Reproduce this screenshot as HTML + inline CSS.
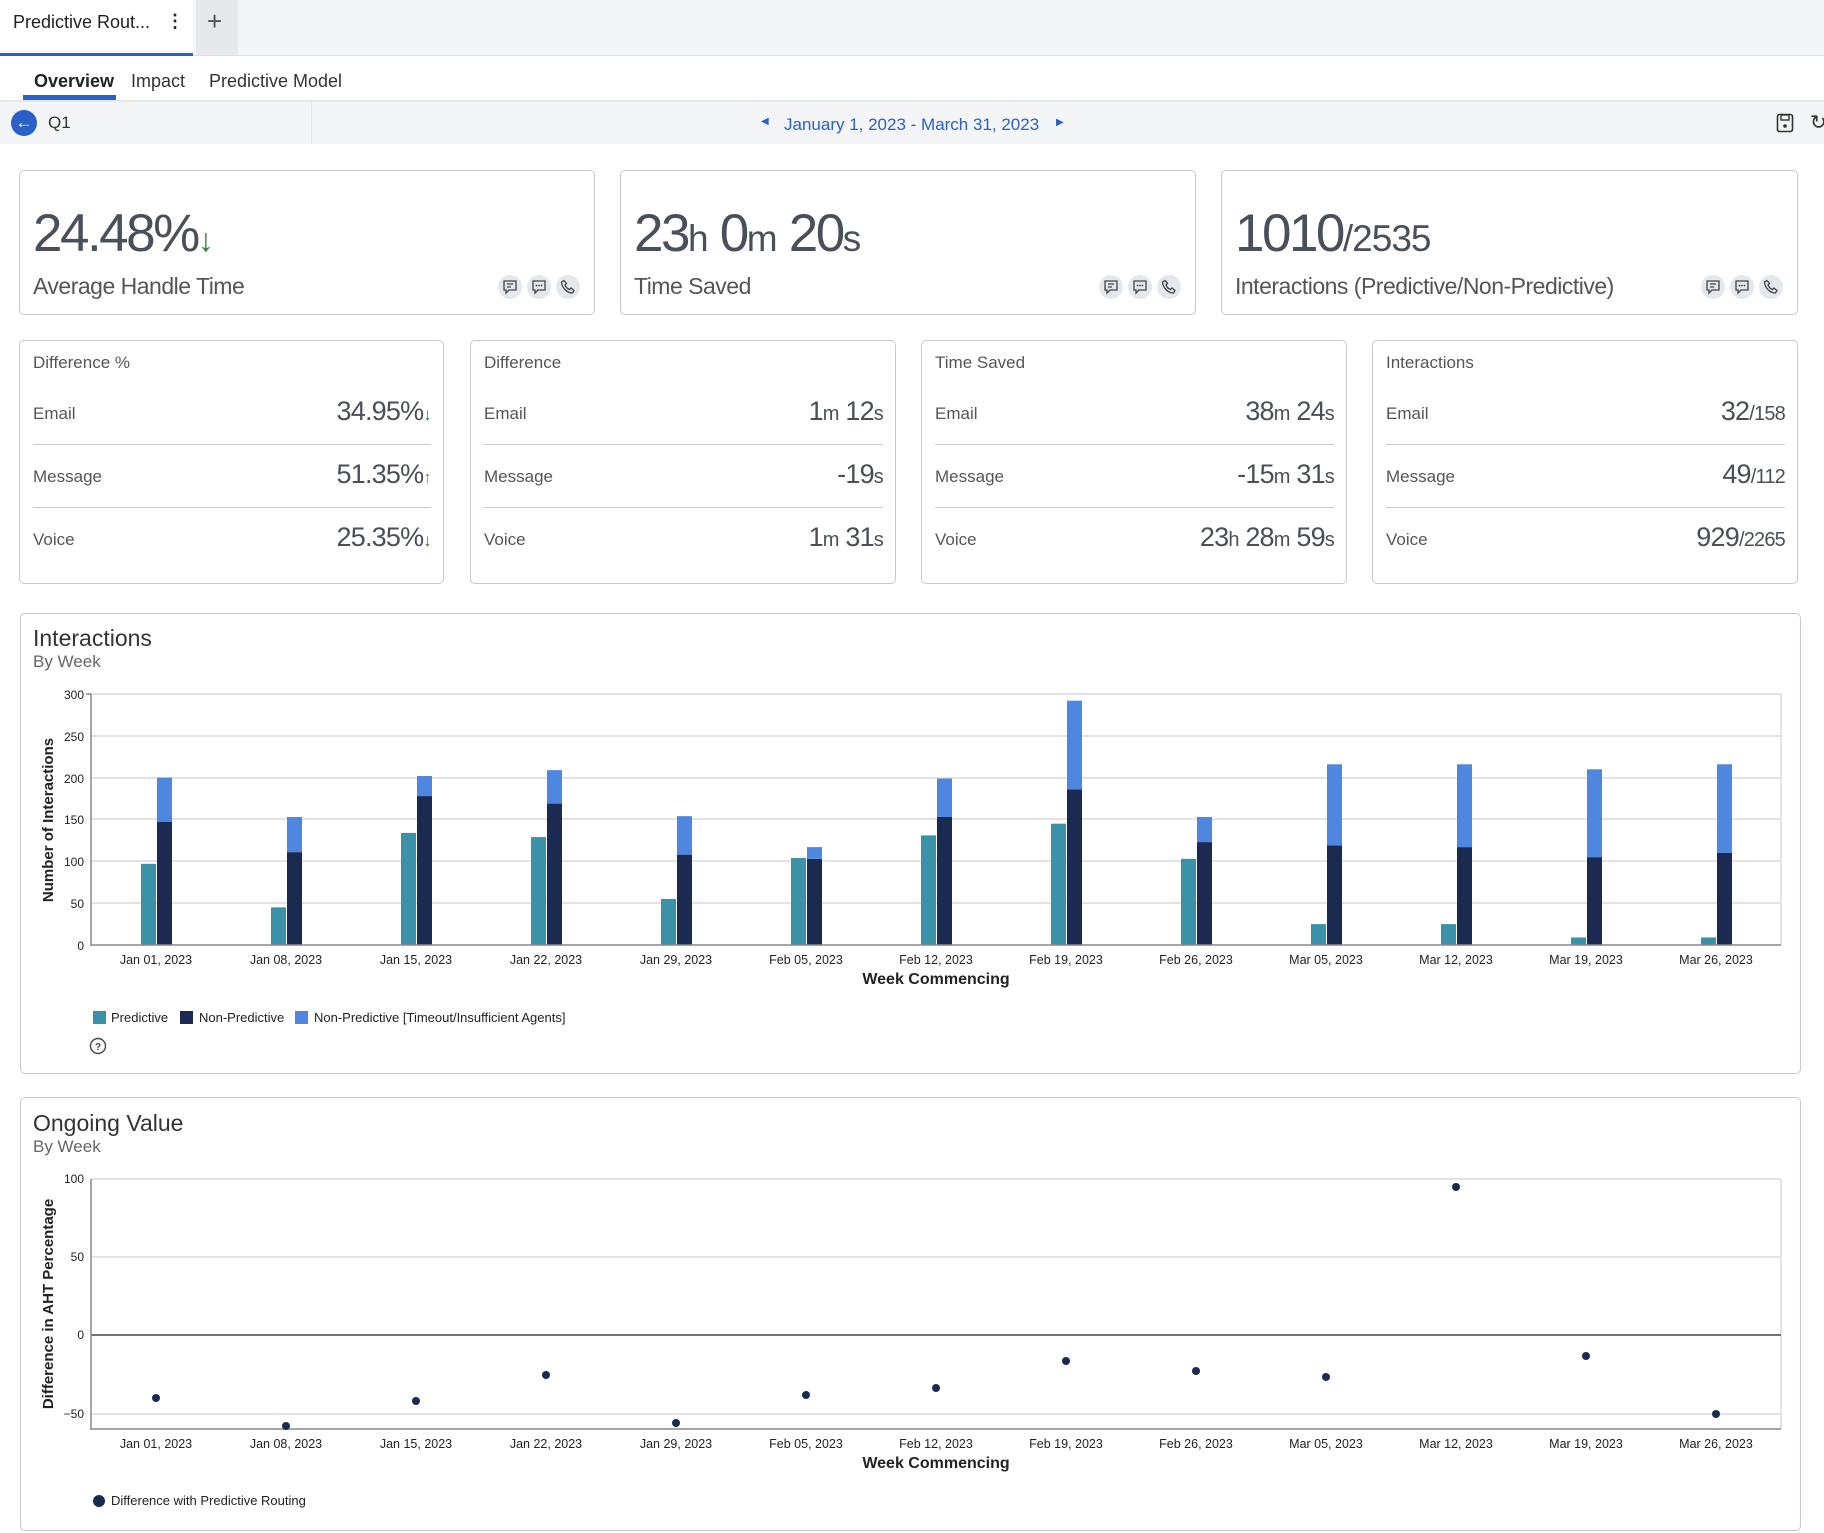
<!DOCTYPE html>
<html><head><meta charset="utf-8"><style>
*{box-sizing:border-box;margin:0;padding:0}
body{width:1824px;height:1533px;overflow:hidden;background:#fff;font-family:"Liberation Sans",sans-serif;color:#333;position:relative}
.a{position:absolute;white-space:nowrap}
.card{position:absolute;border:1px solid #c5c9d1;border-radius:5px;background:#fff}
.big{position:absolute;left:13px;top:32px;font-size:53px;letter-spacing:-2.5px;color:#4a505a}
.big small{font-size:37px;letter-spacing:-1px}
.lbl{position:absolute;left:13px;top:102px;font-size:23px;color:#555;letter-spacing:-.5px}
.ic{position:absolute;top:104px;width:24px;height:24px;border-radius:12px;background:#e4e7ec}
.ic svg{position:absolute;left:4px;top:4px}
.sc .t{position:absolute;left:13px;top:12px;font-size:17px;color:#555}
.row{position:absolute;left:13px;right:12px;height:62px}
.row .l{position:absolute;left:0;top:20px;font-size:17px;color:#555}
.row .v{position:absolute;right:0;top:12px;font-size:27px;color:#4a4f57;letter-spacing:-.8px}
.row .v small{font-size:20px}
.sep{position:absolute;left:13px;right:12px;height:1px;background:#c5c9d1}
.dn{color:#2e7d32;font-size:17px}.up{color:#d2691e;font-size:17px}
</style></head><body>
<div class="a" style="left:0;top:0;width:1824px;height:56px;background:#f4f5f7;border-bottom:1px solid #dde0e5"></div>
<div class="a" style="left:0;top:0;width:193px;height:56px;background:#fff;border-bottom:3px solid #2a60c8"></div>
<div class="a" style="left:13px;top:12px;font-size:18px;color:#222">Predictive Rout...</div>
<div class="a" style="left:166px;top:11px;font-size:18px;font-weight:bold;color:#222">⋮</div>
<div class="a" style="left:196px;top:0;width:42px;height:55px;background:#e6e8ec"></div>
<div class="a" style="left:207px;top:6px;font-size:26px;color:#555">+</div>
<div class="a" style="left:0;top:100px;width:1824px;height:2px;background:#e3e6ea"></div>
<div class="a" style="left:34px;top:71px;font-size:18px;font-weight:bold;color:#222">Overview</div>
<div class="a" style="left:23px;top:95px;width:93px;height:5px;background:#2a60c8"></div>
<div class="a" style="left:131px;top:71px;font-size:18px;color:#333">Impact</div>
<div class="a" style="left:209px;top:71px;font-size:18px;color:#333">Predictive Model</div>
<div class="a" style="left:0;top:102px;width:1824px;height:42px;background:#f4f5f7"></div>
<div class="a" style="left:311px;top:102px;width:1px;height:42px;background:#e3e6ea"></div>
<div class="a" style="left:11px;top:110px;width:26px;height:26px;border-radius:13px;background:#2a60c8;color:#fff;font-size:17px;text-align:center;line-height:25px">←</div>
<div class="a" style="left:48px;top:113px;font-size:17px;color:#333">Q1</div>
<div class="a" style="left:761px;top:116px;font-size:10px;color:#2a60c8">◀</div>
<div class="a" style="left:784px;top:115px;font-size:17px;color:#2a60c8">January 1, 2023 - March 31, 2023</div>
<div class="a" style="left:1056px;top:117px;font-size:10px;color:#2a60c8">▶</div>
<svg class="a" style="left:1776px;top:113px" width="18" height="20" viewBox="0 0 18 20"><rect x="1.5" y="1.5" width="15" height="17" rx="2" fill="none" stroke="#333" stroke-width="1.6"/><rect x="5" y="2" width="8" height="5" fill="none" stroke="#333" stroke-width="1.4"/><circle cx="9" cy="13" r="1.8" fill="#333"/></svg>
<div class="a" style="left:1810px;top:110px;font-size:20px;color:#333">↻</div>

<div class="card" style="left:19px;top:170px;width:576px;height:145px">
 <div class="big">24.48%<span style="color:#2e7d32;font-size:32px">↓</span></div>
 <div class="lbl">Average Handle Time</div>
 <div class="ic" style="left:478px"><svg width="16" height="16" viewBox="0 0 16 16"><path d="M2 2h12v9H7l-3 3v-3H2z" fill="none" stroke="#444" stroke-width="1.3"/><path d="M5 5h6M5 8h4" stroke="#444" stroke-width="1.3"/></svg></div>
 <div class="ic" style="left:507px"><svg width="16" height="16" viewBox="0 0 16 16"><path d="M2 2h12v9H7l-3 3v-3H2z" fill="none" stroke="#444" stroke-width="1.3"/><circle cx="5.5" cy="6.5" r=".9" fill="#444"/><circle cx="8" cy="6.5" r=".9" fill="#444"/><circle cx="10.5" cy="6.5" r=".9" fill="#444"/></svg></div>
 <div class="ic" style="left:536px"><svg width="16" height="16" viewBox="0 0 16 16"><path d="M4 1.5l2.5 3-1.5 1.5c.8 2 2.5 3.7 4.5 4.5l1.5-1.5 3 2.5-1.5 2.5C7 14 2 9 1.5 3z" fill="none" stroke="#444" stroke-width="1.3"/></svg></div>
</div>
<div class="card" style="left:620px;top:170px;width:576px;height:145px">
 <div class="big">23<small>h</small> 0<small>m</small> 20<small>s</small></div>
 <div class="lbl">Time Saved</div>
 <div class="ic" style="left:478px"><svg width="16" height="16" viewBox="0 0 16 16"><path d="M2 2h12v9H7l-3 3v-3H2z" fill="none" stroke="#444" stroke-width="1.3"/><path d="M5 5h6M5 8h4" stroke="#444" stroke-width="1.3"/></svg></div>
 <div class="ic" style="left:507px"><svg width="16" height="16" viewBox="0 0 16 16"><path d="M2 2h12v9H7l-3 3v-3H2z" fill="none" stroke="#444" stroke-width="1.3"/><circle cx="5.5" cy="6.5" r=".9" fill="#444"/><circle cx="8" cy="6.5" r=".9" fill="#444"/><circle cx="10.5" cy="6.5" r=".9" fill="#444"/></svg></div>
 <div class="ic" style="left:536px"><svg width="16" height="16" viewBox="0 0 16 16"><path d="M4 1.5l2.5 3-1.5 1.5c.8 2 2.5 3.7 4.5 4.5l1.5-1.5 3 2.5-1.5 2.5C7 14 2 9 1.5 3z" fill="none" stroke="#444" stroke-width="1.3"/></svg></div>
</div>
<div class="card" style="left:1221px;top:170px;width:577px;height:145px">
 <div class="big">1010<small>/2535</small></div>
 <div class="lbl">Interactions (Predictive/Non-Predictive)</div>
 <div class="ic" style="left:479px"><svg width="16" height="16" viewBox="0 0 16 16"><path d="M2 2h12v9H7l-3 3v-3H2z" fill="none" stroke="#444" stroke-width="1.3"/><path d="M5 5h6M5 8h4" stroke="#444" stroke-width="1.3"/></svg></div>
 <div class="ic" style="left:508px"><svg width="16" height="16" viewBox="0 0 16 16"><path d="M2 2h12v9H7l-3 3v-3H2z" fill="none" stroke="#444" stroke-width="1.3"/><circle cx="5.5" cy="6.5" r=".9" fill="#444"/><circle cx="8" cy="6.5" r=".9" fill="#444"/><circle cx="10.5" cy="6.5" r=".9" fill="#444"/></svg></div>
 <div class="ic" style="left:537px"><svg width="16" height="16" viewBox="0 0 16 16"><path d="M4 1.5l2.5 3-1.5 1.5c.8 2 2.5 3.7 4.5 4.5l1.5-1.5 3 2.5-1.5 2.5C7 14 2 9 1.5 3z" fill="none" stroke="#444" stroke-width="1.3"/></svg></div>
</div>

<div class="card sc" style="left:19px;top:340px;width:425px;height:244px">
 <div class="t">Difference %</div>
 <div class="row" style="top:43px"><span class="l">Email</span><span class="v">34.95%<span class="dn">↓</span></span></div>
 <div class="sep" style="top:103px"></div>
 <div class="row" style="top:106px"><span class="l">Message</span><span class="v">51.35%<span class="up">↑</span></span></div>
 <div class="sep" style="top:166px"></div>
 <div class="row" style="top:169px"><span class="l">Voice</span><span class="v">25.35%<span class="dn">↓</span></span></div>
</div>
<div class="card sc" style="left:470px;top:340px;width:426px;height:244px">
 <div class="t">Difference</div>
 <div class="row" style="top:43px"><span class="l">Email</span><span class="v">1<small>m</small> 12<small>s</small></span></div>
 <div class="sep" style="top:103px"></div>
 <div class="row" style="top:106px"><span class="l">Message</span><span class="v">-19<small>s</small></span></div>
 <div class="sep" style="top:166px"></div>
 <div class="row" style="top:169px"><span class="l">Voice</span><span class="v">1<small>m</small> 31<small>s</small></span></div>
</div>
<div class="card sc" style="left:921px;top:340px;width:426px;height:244px">
 <div class="t">Time Saved</div>
 <div class="row" style="top:43px"><span class="l">Email</span><span class="v">38<small>m</small> 24<small>s</small></span></div>
 <div class="sep" style="top:103px"></div>
 <div class="row" style="top:106px"><span class="l">Message</span><span class="v">-15<small>m</small> 31<small>s</small></span></div>
 <div class="sep" style="top:166px"></div>
 <div class="row" style="top:169px"><span class="l">Voice</span><span class="v">23<small>h</small> 28<small>m</small> 59<small>s</small></span></div>
</div>
<div class="card sc" style="left:1372px;top:340px;width:426px;height:244px">
 <div class="t">Interactions</div>
 <div class="row" style="top:43px"><span class="l">Email</span><span class="v">32<small>/158</small></span></div>
 <div class="sep" style="top:103px"></div>
 <div class="row" style="top:106px"><span class="l">Message</span><span class="v">49<small>/112</small></span></div>
 <div class="sep" style="top:166px"></div>
 <div class="row" style="top:169px"><span class="l">Voice</span><span class="v">929<small>/2265</small></span></div>
</div>

<div class="card" style="left:20px;top:613px;width:1781px;height:461px"></div>
<div class="a" style="left:33px;top:625px;font-size:23px;color:#333">Interactions</div>
<div class="a" style="left:33px;top:652px;font-size:17px;color:#666">By Week</div>
<svg class="a" style="left:0;top:0" width="1824" height="1533" font-family="Liberation Sans, sans-serif">
 <g stroke="#e3e3e3" stroke-width="2">
  <line x1="91" y1="694" x2="1781" y2="694"/><line x1="91" y1="736" x2="1781" y2="736"/><line x1="91" y1="778" x2="1781" y2="778"/><line x1="91" y1="819" x2="1781" y2="819"/><line x1="91" y1="861" x2="1781" y2="861"/><line x1="91" y1="903" x2="1781" y2="903"/><line x1="1781" y1="694" x2="1781" y2="945"/>
 </g>
 <g font-size="12" fill="#222" text-anchor="end">
  <text x="84" y="699">300</text><text x="84" y="741">250</text><text x="84" y="783">200</text><text x="84" y="824">150</text><text x="84" y="866">100</text><text x="84" y="908">50</text><text x="84" y="950">0</text>
 </g>
 <g transform="translate(0,945) scale(1,-0.8367)">
  <g fill="#3b92a8">
   <rect x="141" y="0" width="15" height="97"/><rect x="271" y="0" width="15" height="45"/><rect x="401" y="0" width="15" height="134"/><rect x="531" y="0" width="15" height="129"/><rect x="661" y="0" width="15" height="55"/><rect x="791" y="0" width="15" height="104"/><rect x="921" y="0" width="15" height="131"/><rect x="1051" y="0" width="15" height="145"/><rect x="1181" y="0" width="15" height="103"/><rect x="1311" y="0" width="15" height="25"/><rect x="1441" y="0" width="15" height="25"/><rect x="1571" y="0" width="15" height="9"/><rect x="1701" y="0" width="15" height="9"/>
  </g>
  <g fill="#1a2a50">
   <rect x="157" y="0" width="15" height="147"/><rect x="287" y="0" width="15" height="111"/><rect x="417" y="0" width="15" height="178"/><rect x="547" y="0" width="15" height="169"/><rect x="677" y="0" width="15" height="108"/><rect x="807" y="0" width="15" height="103"/><rect x="937" y="0" width="15" height="153"/><rect x="1067" y="0" width="15" height="186"/><rect x="1197" y="0" width="15" height="123"/><rect x="1327" y="0" width="15" height="119"/><rect x="1457" y="0" width="15" height="117"/><rect x="1587" y="0" width="15" height="105"/><rect x="1717" y="0" width="15" height="110"/>
  </g>
  <g fill="#4f86e0">
   <rect x="157" y="147" width="15" height="53"/><rect x="287" y="111" width="15" height="42"/><rect x="417" y="178" width="15" height="24"/><rect x="547" y="169" width="15" height="40"/><rect x="677" y="108" width="15" height="46"/><rect x="807" y="103" width="15" height="14"/><rect x="937" y="153" width="15" height="46"/><rect x="1067" y="186" width="15" height="106"/><rect x="1197" y="123" width="15" height="30"/><rect x="1327" y="119" width="15" height="97"/><rect x="1457" y="117" width="15" height="99"/><rect x="1587" y="105" width="15" height="105"/><rect x="1717" y="110" width="15" height="106"/>
  </g>
 </g>
 <g stroke="#888" stroke-width="1.5"><line x1="91" y1="694" x2="91" y2="946"/><line x1="86" y1="694" x2="91" y2="694"/><line x1="91" y1="945" x2="1781" y2="945"/></g>
 <g font-size="12.5" fill="#222" text-anchor="middle">
  <text x="156" y="964">Jan 01, 2023</text><text x="286" y="964">Jan 08, 2023</text><text x="416" y="964">Jan 15, 2023</text><text x="546" y="964">Jan 22, 2023</text><text x="676" y="964">Jan 29, 2023</text><text x="806" y="964">Feb 05, 2023</text><text x="936" y="964">Feb 12, 2023</text><text x="1066" y="964">Feb 19, 2023</text><text x="1196" y="964">Feb 26, 2023</text><text x="1326" y="964">Mar 05, 2023</text><text x="1456" y="964">Mar 12, 2023</text><text x="1586" y="964">Mar 19, 2023</text><text x="1716" y="964">Mar 26, 2023</text>
 </g>
 <text x="936" y="984" font-size="16" font-weight="bold" text-anchor="middle" fill="#222">Week Commencing</text>
 <text transform="translate(53,820) rotate(-90)" font-size="15" font-weight="bold" text-anchor="middle" fill="#222">Number of Interactions</text>
 <rect x="93" y="1011" width="13" height="13" fill="#3b92a8"/><text x="111" y="1022" font-size="13" fill="#222">Predictive</text>
 <rect x="180" y="1011" width="13" height="13" fill="#1a2a50"/><text x="199" y="1022" font-size="13" fill="#222">Non-Predictive</text>
 <rect x="295" y="1011" width="13" height="13" fill="#4f86e0"/><text x="314" y="1022" font-size="13" fill="#222">Non-Predictive [Timeout/Insufficient Agents]</text>
 <circle cx="98" cy="1046" r="7.5" fill="none" stroke="#444" stroke-width="1.4"/><text x="98" y="1050" font-size="10" font-weight="bold" text-anchor="middle" fill="#444">?</text>

 <g stroke="#e3e3e3" stroke-width="2">
  <line x1="91" y1="1179" x2="1781" y2="1179"/><line x1="91" y1="1257" x2="1781" y2="1257"/><line x1="91" y1="1414" x2="1781" y2="1414"/><line x1="1781" y1="1179" x2="1781" y2="1429"/>
 </g>
 <line x1="91" y1="1335" x2="1781" y2="1335" stroke="#444" stroke-width="1.5"/>
 <g stroke="#888" stroke-width="1.5"><line x1="91" y1="1179" x2="91" y2="1430"/><line x1="91" y1="1429" x2="1781" y2="1429"/></g>
 <g font-size="12" fill="#222" text-anchor="end">
  <text x="84" y="1183">100</text><text x="84" y="1261">50</text><text x="84" y="1339">0</text><text x="84" y="1418">−50</text>
 </g>
 <g fill="#1a2a50">
  <circle cx="156" cy="1398" r="4"/><circle cx="286" cy="1426" r="4"/><circle cx="416" cy="1401" r="4"/><circle cx="546" cy="1375" r="4"/><circle cx="676" cy="1423" r="4"/><circle cx="806" cy="1395" r="4"/><circle cx="936" cy="1388" r="4"/><circle cx="1066" cy="1361" r="4"/><circle cx="1196" cy="1371" r="4"/><circle cx="1326" cy="1377" r="4"/><circle cx="1456" cy="1187" r="4"/><circle cx="1586" cy="1356" r="4"/><circle cx="1716" cy="1414" r="4"/>
 </g>
 <g font-size="12.5" fill="#222" text-anchor="middle">
  <text x="156" y="1448">Jan 01, 2023</text><text x="286" y="1448">Jan 08, 2023</text><text x="416" y="1448">Jan 15, 2023</text><text x="546" y="1448">Jan 22, 2023</text><text x="676" y="1448">Jan 29, 2023</text><text x="806" y="1448">Feb 05, 2023</text><text x="936" y="1448">Feb 12, 2023</text><text x="1066" y="1448">Feb 19, 2023</text><text x="1196" y="1448">Feb 26, 2023</text><text x="1326" y="1448">Mar 05, 2023</text><text x="1456" y="1448">Mar 12, 2023</text><text x="1586" y="1448">Mar 19, 2023</text><text x="1716" y="1448">Mar 26, 2023</text>
 </g>
 <text x="936" y="1468" font-size="16" font-weight="bold" text-anchor="middle" fill="#222">Week Commencing</text>
 <text transform="translate(53,1304) rotate(-90)" font-size="15" font-weight="bold" text-anchor="middle" fill="#222">Difference in AHT Percentage</text>
 <circle cx="99" cy="1501" r="6" fill="#1a2a50"/><text x="111" y="1505" font-size="13" fill="#222">Difference with Predictive Routing</text>
</svg>
<div class="card" style="left:20px;top:1097px;width:1781px;height:434px;background:transparent"></div>
<div class="a" style="left:33px;top:1110px;font-size:23px;color:#333">Ongoing Value</div>
<div class="a" style="left:33px;top:1137px;font-size:17px;color:#666">By Week</div>
</body></html>
